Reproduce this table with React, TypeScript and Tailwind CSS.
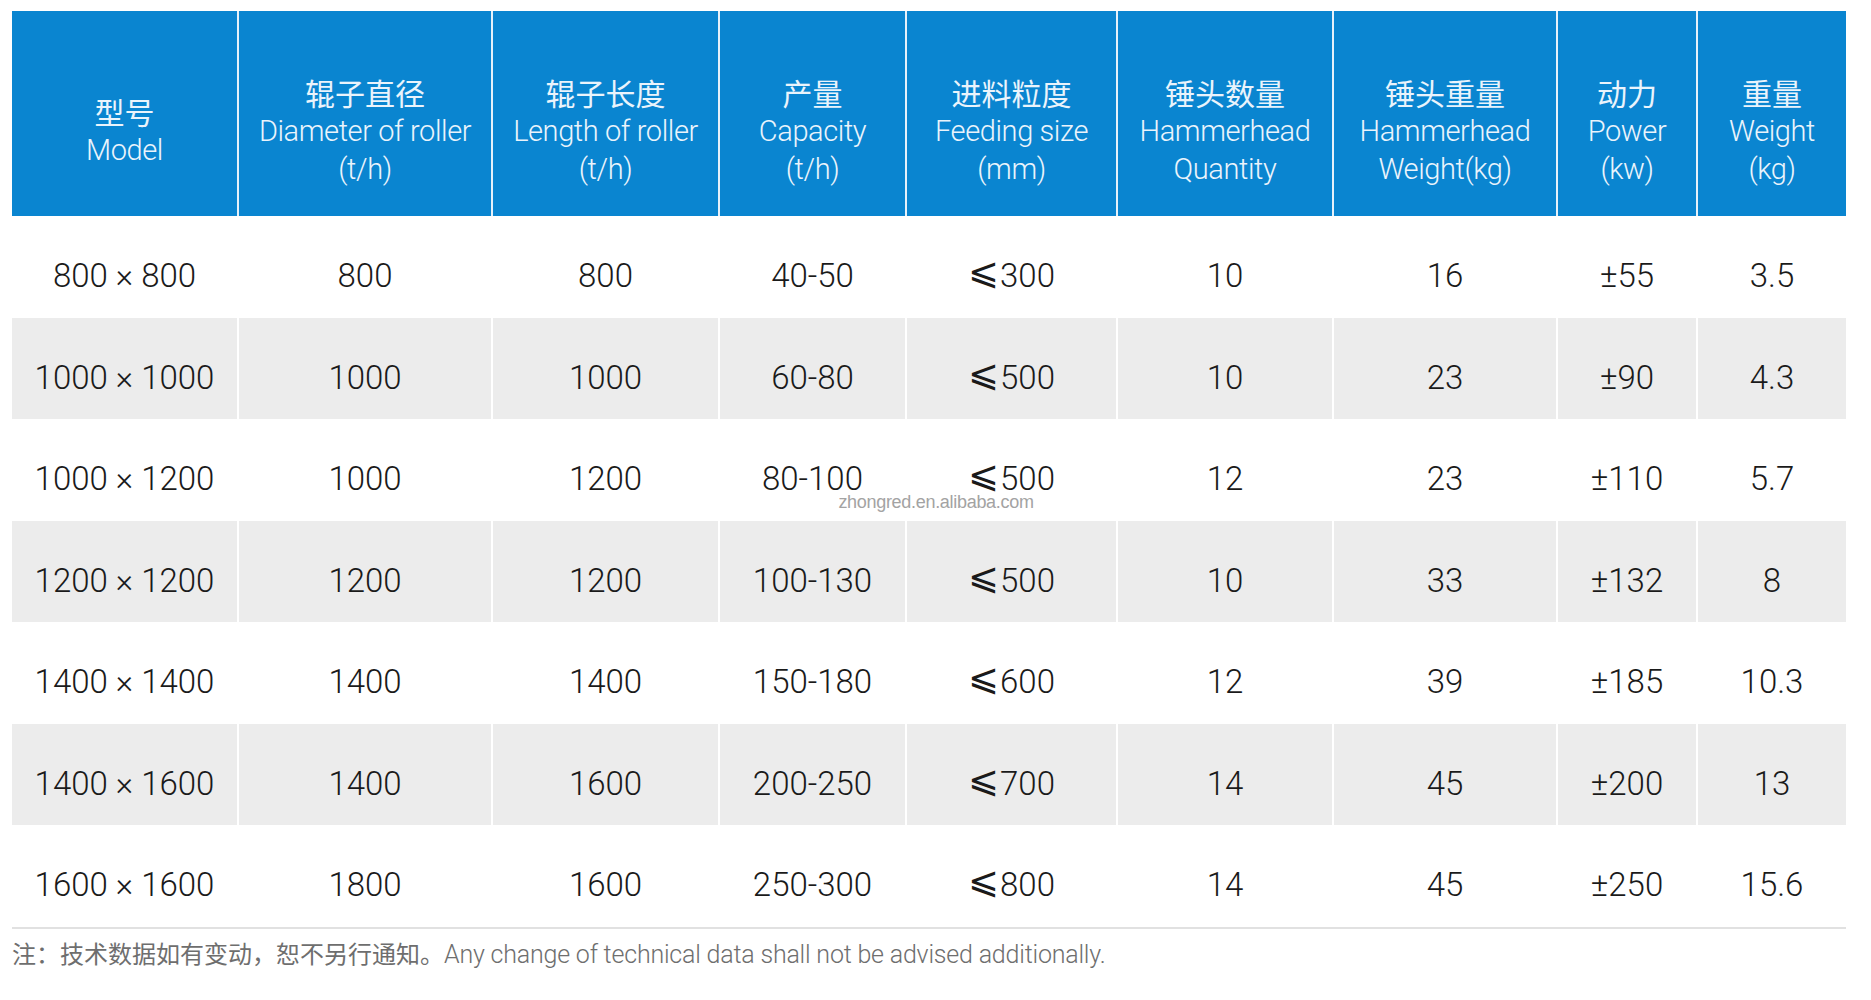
import React from 'react';

const cols = [
  'w-[227px]',
  'w-[254px]',
  'w-[227px]',
  'w-[187px]',
  'w-[211px]',
  'w-[216px]',
  'w-[224px]',
  'w-[140px]',
  'w-[148px]',
];

const headers: { zh: string; en: string[] }[] = [
  { zh: '型号', en: ['Model'] },
  { zh: '辊子直径', en: ['Diameter of roller', '(t/h)'] },
  { zh: '辊子长度', en: ['Length of roller', '(t/h)'] },
  { zh: '产量', en: ['Capacity', '(t/h)'] },
  { zh: '进料粒度', en: ['Feeding size', '(mm)'] },
  { zh: '锤头数量', en: ['Hammerhead', 'Quantity'] },
  { zh: '锤头重量', en: ['Hammerhead', 'Weight(kg)'] },
  { zh: '动力', en: ['Power', '(kw)'] },
  { zh: '重量', en: ['Weight', '(kg)'] },
];

const rows = [
  ['800 × 800', '800', '800', '40-50', '⩽300', '10', '16', '±55', '3.5'],
  ['1000 × 1000', '1000', '1000', '60-80', '⩽500', '10', '23', '±90', '4.3'],
  ['1000 × 1200', '1000', '1200', '80-100', '⩽500', '12', '23', '±110', '5.7'],
  ['1200 × 1200', '1200', '1200', '100-130', '⩽500', '10', '33', '±132', '8'],
  ['1400 × 1400', '1400', '1400', '150-180', '⩽600', '12', '39', '±185', '10.3'],
  ['1400 × 1600', '1400', '1600', '200-250', '⩽700', '14', '45', '±200', '13'],
  ['1600 × 1600', '1800', '1600', '250-300', '⩽800', '14', '45', '±250', '15.6'],
];

function Cell({ text }: { text: string }) {
  if (text.startsWith('⩽')) {
    return (
      <span className="flex items-baseline">
        <span className="relative -top-[3px] font-['DejaVu_Sans',sans-serif] font-extralight text-[37px] leading-[28px] mr-[1px]">⩽</span>
        {text.slice(1)}
      </span>
    );
  }
  return <>{text}</>;
}

export default function App() {
  return (
    <div className="relative w-[1871px] h-[1000px] bg-white pl-[12px] pt-[11px] font-['Roboto','Noto_Sans_CJK_SC',sans-serif]">
      <div className="w-[1834px]">
        {/* header */}
        <div className="flex h-[205px] bg-[#0a85d0]">
          {headers.map((h, i) => (
            <div
              key={i}
              className={`${cols[i]} ${i < 8 ? 'border-r-2 border-[#e6f1fa]' : ''} flex flex-col items-center justify-center pt-[34px] text-[#eaf4fc]`}
            >
              <div className="text-[30px] leading-[39px] font-normal font-['Noto_Sans_CJK_SC',sans-serif]">{h.zh}</div>
              {h.en.map((t, j) => (
                <div key={j} className="text-[29px] leading-[38px] font-light tracking-[-0.4px] whitespace-nowrap">
                  {t}
                </div>
              ))}
            </div>
          ))}
        </div>

        {/* body */}
        {rows.map((r, ri) => (
          <div key={ri} className={`flex h-[101.5px] ${ri % 2 === 1 ? 'bg-[#ececec]' : 'bg-white'}`}>
            {r.map((c, ci) => (
              <div
                key={ci}
                className={`${cols[ci]} ${ci < 8 ? 'border-r-2 border-white' : ''} flex items-center justify-center pt-[19px] text-[33px] leading-[30px] font-light text-[#1a1a1a] whitespace-nowrap`}
              >
                <Cell text={c} />
              </div>
            ))}
          </div>
        ))}

        <div className="h-[2px] bg-[#e1e1e1]" />
        <div className="pt-[8px] text-[25px] text-[#6e6e6e] font-light leading-[32px] tracking-[-0.2px]">
          <span className="font-['Noto_Sans_CJK_SC',sans-serif] text-[24px] font-normal tracking-normal">注：技术数据如有变动，恕不另行通知。</span>
          Any change of technical data shall not be advised additionally.
        </div>
      </div>

      <div className="absolute left-[936px] top-[493px] -translate-x-1/2 text-[18px] leading-[18px] text-[#a3a3a3] font-['Liberation_Sans',sans-serif] tracking-[-0.3px]">
        zhongred.en.alibaba.com
      </div>
    </div>
  );
}
